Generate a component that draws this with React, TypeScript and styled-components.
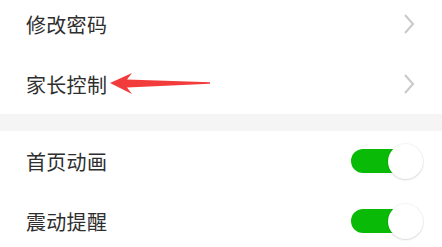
import styled, { createGlobalStyle } from "styled-components";

const GlobalStyle = createGlobalStyle`
  body {
    margin: 0;
    background: #ffffff;
    font-family: "Noto Sans CJK SC", "Noto Sans", sans-serif;
  }
`;

const Page = styled.div`
  position: relative;
  width: 442px;
  height: 247px;
  overflow: hidden;
  background: #ffffff;
`;

const Section = styled.div<{ $offset?: number }>`
  display: flex;
  flex-direction: column;
  margin-top: ${(p) => p.$offset ?? 0}px;
`;

const Row = styled.div`
  height: 60px;
  display: flex;
  align-items: center;
  justify-content: space-between;
  padding: 0 19px 0 26px;
`;

const Label = styled.span`
  font-size: 20px;
  color: #2e2e2e;
  letter-spacing: 0.3px;
`;

const Gap = styled.div`
  height: 17px;
  background: #f5f5f5;
`;

const ChevronBox = styled.div`
  width: 20px;
  display: flex;
  justify-content: flex-start;
`;

const Switch = styled.div`
  position: relative;
  width: 72px;
  height: 35px;
  display: flex;
  align-items: center;
`;

const Track = styled.div<{ $on: boolean }>`
  width: 58px;
  height: 24px;
  border-radius: 12px;
  background: ${(p) => (p.$on ? "#09bb07" : "#e5e5e5")};
`;

const Knob = styled.div`
  position: absolute;
  right: 0;
  top: 0;
  width: 35px;
  height: 35px;
  border-radius: 50%;
  background: #ffffff;
  box-shadow: 0 1px 2px rgba(0, 0, 0, 0.12), 0 0 0 1px rgba(0, 0, 0, 0.04);
`;

const Annotation = styled.svg`
  position: absolute;
  left: 108px;
  top: 70px;
`;

const Chevron = () => (
  <svg width="12" height="22" viewBox="0 0 12 22">
    <path d="M2 2 L10 11 L2 20" fill="none" stroke="#c9c9c9" strokeWidth="2" />
  </svg>
);

const ToggleSwitch = ({ on }: { on: boolean }) => (
  <Switch>
    <Track $on={on} />
    <Knob />
  </Switch>
);

export default function App() {
  return (
    <Page>
      <GlobalStyle />
      <Section $offset={-6}>
        <Row>
          <Label>修改密码</Label>
          <ChevronBox>
            <Chevron />
          </ChevronBox>
        </Row>
        <Row>
          <Label>家长控制</Label>
          <ChevronBox>
            <Chevron />
          </ChevronBox>
        </Row>
      </Section>
      <Gap />
      <Section>
        <Row>
          <Label>首页动画</Label>
          <ToggleSwitch on />
        </Row>
        <Row>
          <Label>震动提醒</Label>
          <ToggleSwitch on />
        </Row>
      </Section>
      <Annotation width="106" height="28" viewBox="0 0 106 28">
        <polygon
          points="2,13 24,3 19,9.5 102,12.2 102,13.8 19,17.5 24,24"
          fill="#f23c3c"
        />
      </Annotation>
    </Page>
  );
}
